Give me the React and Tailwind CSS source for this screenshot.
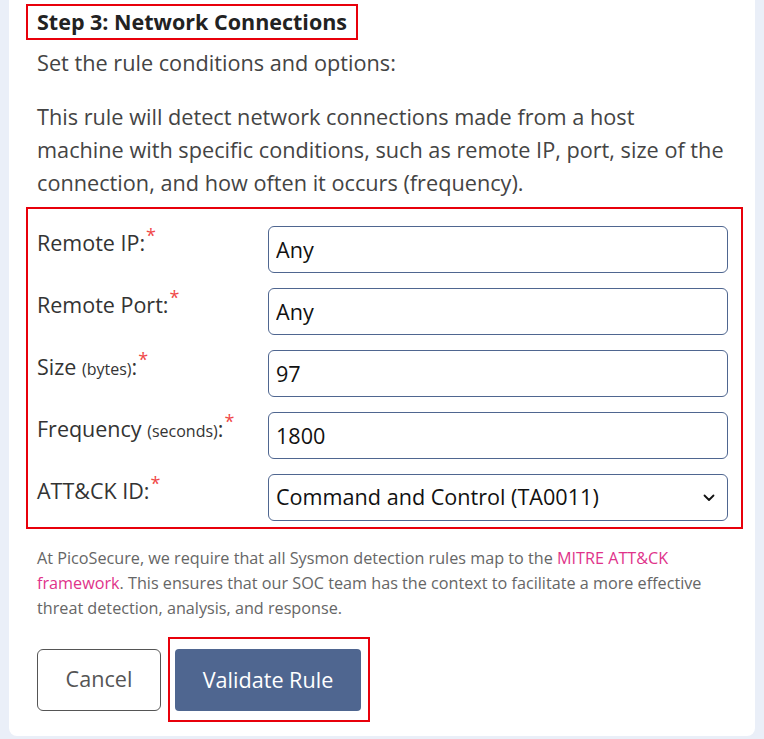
import React from 'react';

const fields = [
  { label: 'Remote IP:', value: 'Any' },
  { label: 'Remote Port:', value: 'Any' },
  { label: 'Size', unit: '(bytes)', value: '97' },
  { label: 'Frequency', unit: '(seconds)', value: '1800' },
];

const Required = () => (
  <span className="text-[18px] text-[#f04848] ml-[1px] relative top-[-9px] leading-none">*</span>
);

const App = () => {
  return (
    <div
      className="min-h-screen bg-[#eaeff8] px-[9px] text-[#444]"
      style={{ fontFamily: '"Open Sans", "Noto Sans", sans-serif' }}
    >
      <div className="bg-white rounded-b-lg pl-[17px] pr-[12px] pt-[4px] pb-[14px]">
        {/* Heading */}
        <div className="inline-block border-2 border-[#e8000b] px-[9px] h-[36px] leading-[32px]">
          <h2 className="text-[21.5px] font-bold text-[#222]">Step 3: Network Connections</h2>
        </div>

        <div className="pl-[11px] pr-[17px] text-[21.7px] leading-[33px]">
          <p className="mt-[6px]">Set the rule conditions and options:</p>
          <p className="mt-[21px]">
            This rule will detect network connections made from a host machine with specific
            conditions, such as remote IP, port, size of the connection, and how often it occurs
            (frequency).
          </p>
        </div>

        {/* Conditions */}
        <div className="mt-[8px] border-[2.5px] border-[#e8000b] pl-[9px] pr-[13px] pt-[17px] pb-[6px] flex flex-col gap-[15px]">
          {fields.map((f) => (
            <div key={f.label} className="flex items-start">
              <label className="w-[231px] shrink-0 text-[21.5px] leading-[30px] text-[#333] pt-[2px]">
                {f.label}
                {f.unit && (
                  <>
                    {' '}
                    <span className="text-[16px]">{f.unit}</span>:
                  </>
                )}
                <Required />
              </label>
              <input
                readOnly
                value={f.value}
                className="flex-1 h-[47px] border border-[#4f6690] rounded-[6px] px-[7px] text-[21.6px] text-[#111] outline-none"
              />
            </div>
          ))}
          <div className="flex items-start">
            <label className="w-[231px] shrink-0 text-[21.5px] leading-[30px] text-[#333] pt-[2px]">
              ATT&amp;CK ID:
              <Required />
            </label>
            <div className="flex-1 h-[47px] border border-[#4f6690] rounded-[6px] pl-[7px] pr-[12px] flex items-center justify-between text-[21.6px] text-[#111]">
              <span>Command and Control (TA0011)</span>
              <svg width="12" height="8" viewBox="0 0 12 8" fill="none">
                <path d="M1.5 1.5 6 6l4.5-4.5" stroke="#111" strokeWidth="1.8" strokeLinecap="round" strokeLinejoin="round" />
              </svg>
            </div>
          </div>
        </div>

        <p className="mt-[17px] px-[11px] text-[16.2px] leading-[25px] text-[#666]">
          At PicoSecure, we require that all Sysmon detection rules map to the{' '}
          <a className="text-[#e0338a]">MITRE ATT&amp;CK framework</a>. This ensures that our SOC
          team has the context to facilitate a more effective threat detection, analysis, and
          response.
        </p>

        {/* Actions */}
        <div className="mt-[16px] pl-[11px] flex items-center">
          <button className="w-[124px] h-[62px] border border-[#555] rounded-[6px] text-[21.6px] text-[#555]">
            Cancel
          </button>
          <div className="ml-[7px] border-2 border-[#e8000b] pl-[5px] pr-[7px] pt-[10px] pb-[9px]">
            <button className="w-[186px] h-[62px] bg-[#4f6690] rounded-[4px] text-[21.6px] text-white">
              Validate Rule
            </button>
          </div>
        </div>
      </div>
    </div>
  );
};

export default App;
